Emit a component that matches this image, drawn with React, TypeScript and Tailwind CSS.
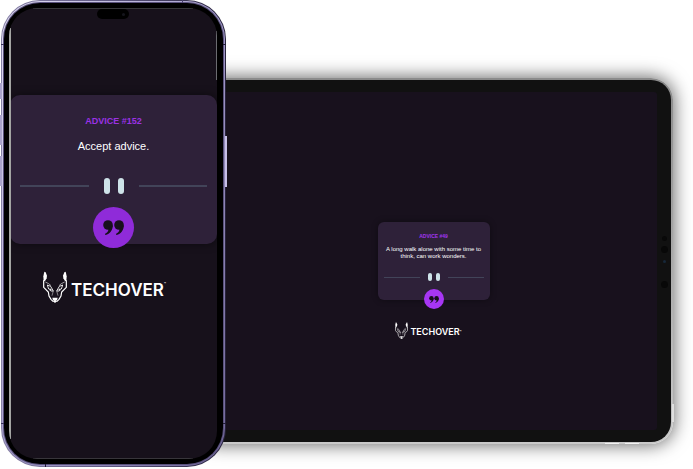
import React from "react";

type Size = "phone" | "tablet";

function WolfHalf() {
  return (
    <>
      <path d="M4 2 L8 4 L12 14 L11 22 L6 30 L2 31 L1 16 Z" fill="#fff" />
      <path d="M2 28 L2 49 L16 63 L18 75 L24 85 L31 92" stroke="#fff" strokeWidth="3.6" />
      <path d="M7 33 L17 38 L24 44" stroke="#fff" strokeWidth="1.8" />
      <path d="M13 42 L23 46 L31 60 L24 60 L17 54 Z" stroke="#fff" strokeWidth="2.6" />
      <path d="M19 50 L27 57 L22 57 Z" fill="#fff" />
      <path d="M31 60 L27 74" stroke="#fff" strokeWidth="1.4" />
    </>
  );
}

function Wolf({ className }: { className: string }) {
  return (
    <svg viewBox="0 0 72 96" className={className} aria-hidden="true" fill="none">
      <WolfHalf />
      <g transform="translate(72 0) scale(-1 1)">
        <WolfHalf />
      </g>
      <path d="M28 80 H44 L42 88 L36 91 L30 88 Z M29 90 H43 L36 96 Z" fill="#fff" />
    </svg>
  );
}

function Quotes({ className }: { className: string }) {
  return (
    <svg viewBox="0 0 21 15" className={className} aria-hidden="true" fill="#17101c">
      <circle cx="5" cy="5" r="4.800" />
      <path d="M9.800 5 C10 10 7 13.800 2.500 15 L1.800 14 C4 12.800 5.600 11.300 5.400 9 Z" />
      <circle cx="16" cy="5" r="4.800" />
      <path d="M20.800 5 C21 10 18 13.800 13.500 15 L12.800 14 C15 12.800 16.600 11.300 16.400 9 Z" />
    </svg>
  );
}

function Logo({ size }: { size: Size }) {
  const phone = size === "phone";
  return (
    <div
      className={
        phone
          ? "mt-[27px] flex items-end justify-center gap-1 pr-5 text-[17px] leading-[26px]"
          : "mt-[22px] flex items-end justify-center gap-[2px] pr-3 text-[9px] leading-[14px]"
      }
    >
      <Wolf className={phone ? "h-8 w-6" : "h-[17px] w-[13px]"} />
      <span className="relative font-['Inter',sans-serif] font-semibold text-white">
        TECHOVER
        <span className="absolute top-1 left-full text-[3px] leading-[6px]">™</span>
      </span>
    </div>
  );
}

function AdviceCard({ size, id, advice }: { size: Size; id: number; advice: string }) {
  const phone = size === "phone";
  const line = phone ? "h-[2px] flex-1 bg-[#424459]" : "h-px flex-1 bg-[#424459]";
  const bar = phone ? "h-4 w-[6px] rounded-full bg-[#cee3e9]" : "h-2 w-1 rounded-full bg-[#cee3e9]";
  return (
    <section
      className={
        phone
          ? "flex w-full flex-col items-center rounded-[10px] bg-[#2e2139] px-[10px] pt-5 text-center shadow-[0_0_8px_rgba(0,0,0,0.5)]"
          : "flex w-[112px] flex-col items-center rounded-md bg-[#2e2139] px-[6px] pt-[11px] text-center shadow-[0_0_6px_rgba(0,0,0,0.4)]"
      }
    >
      <h2
        className={
          phone
            ? "text-[9px] leading-3 font-bold text-[#9a32e4]"
            : "text-[5px] leading-[6px] font-bold text-[#a035ee]"
        }
      >
        ADVICE #{id}
      </h2>
      <p className={phone ? "mt-3 text-[11px] leading-[14px] text-white" : "mt-[7px] text-[6px] leading-[7px] text-white"}>
        {advice}
      </p>
      <div
        className={
          phone
            ? "mt-[25px] flex w-full items-center gap-[15px]"
            : "mt-[13px] flex w-full items-center gap-2"
        }
      >
        <span className={line} />
        <span className={phone ? "flex gap-2" : "flex gap-1"}>
          <span className={bar} />
          <span className={bar} />
        </span>
        <span className={line} />
      </div>
      <button
        type="button"
        aria-label="New advice"
        className={
          phone
            ? "mt-[13px] -mb-1 flex size-[41px] items-center justify-center rounded-full bg-[#8f2bd9]"
            : "mt-2 -mb-[9px] flex size-5 items-center justify-center rounded-full bg-[#a736f4]"
        }
      >
        <Quotes className={phone ? "h-[15px] w-[21px]" : "h-[7px] w-[10px]"} />
      </button>
    </section>
  );
}

function Phone() {
  return (
    <div className="relative z-10 h-[467px] w-[225px] shrink-0 rounded-[39px] bg-linear-to-r from-[#8781a6] via-[#5c5680] to-[#28233d] p-px">
      <span className="absolute top-[83px] -left-px h-4 w-[2px] bg-[#aaa3cb]" />
      <span className="absolute top-[115px] -left-px h-[30px] w-[2px] bg-[#aaa3cb]" />
      <span className="absolute top-[156px] -left-px h-[30px] w-[2px] bg-[#aaa3cb]" />
      <span className="absolute top-[136px] -right-px h-[51px] w-[2px] bg-[#c8c0e8]" />
      <span className="absolute top-0 left-[181px] z-10 h-[3px] w-px bg-[#4a4270]" />
      <span className="absolute bottom-0 left-[44px] z-10 h-[3px] w-px bg-[#211c36]" />
      <span className="absolute top-[44px] left-0 z-10 h-px w-[3px] bg-[#37315a]" />
      <span className="absolute top-[44px] right-0 z-10 h-px w-[3px] bg-[#211c36]" />
      <span className="absolute bottom-[43px] left-0 z-10 h-px w-[3px] bg-[#37315a]" />
      <span className="absolute right-0 bottom-[43px] z-10 h-px w-[3px] bg-[#211c36]" />
      <div className="h-full rounded-[38px] bg-linear-to-br from-[#e0dcf2] via-[#a59dcb] to-[#716799] p-px">
        <div className="h-full rounded-[37px] bg-[#5a527d] p-px">
          <div className="h-full rounded-[36px] bg-black py-[5px] pr-[6px] pl-[5px]">
            <div className="relative flex h-full flex-col overflow-hidden rounded-[28px] bg-[#17111b] pt-[87px] pl-px">
              <AdviceCard size="phone" id={152} advice="Accept advice." />
              <Logo size="phone" />
              <span className="absolute inset-x-6 top-0 h-px bg-[#38383b]" />
              <span className="absolute inset-x-6 bottom-0 h-px bg-[#38363b]" />
              <span className="absolute inset-y-5 left-0 w-[2px] bg-[#a4a5a3]" />
              <span className="absolute top-[23px] right-0 h-[49px] w-px bg-[#6b6b70]" />
              <span className="absolute top-px left-1/2 flex h-[10px] w-8 -translate-x-1/2 items-center justify-end rounded-full bg-black pr-1">
                <span className="size-[3px] rounded-full bg-[#15151c]" />
              </span>
            </div>
          </div>
        </div>
      </div>
    </div>
  );
}

function Tablet() {
  return (
    <div className="relative mt-[78px] mr-5 -ml-[30px] h-[366px] min-w-0 flex-1 rounded-[22px] bg-linear-to-b from-[#8b8b8b] to-[#c9c9c9] pt-[2px] pr-[2px] pb-[2px] shadow-[0_0_18px_1px_rgba(0,0,0,0.6)]">
      <div className="h-full rounded-[20px] bg-[#111111] px-[14px] pt-3 pb-3">
        <div className="flex h-full flex-col items-center rounded-[3px] bg-[#18111d] pt-[130px]">
          <AdviceCard
            size="tablet"
            id={49}
            advice="A long walk alone with some time to think, can work wonders."
          />
          <Logo size="tablet" />
        </div>
      </div>
      <div className="absolute top-[158px] right-[5px] flex w-[7px] flex-col items-center">
        <span className="size-[5px] rounded-full bg-[#090909]" />
        <span className="mt-[5px] size-[7px] rounded-full bg-[#080808]" />
        <span className="mt-[7px] size-[3px] rounded-full bg-[#17283a]" />
        <span className="mt-[18px] size-[7px] rounded-full bg-[#080808]" />
      </div>
      <span className="absolute right-[-1px] bottom-[22px] h-[18px] w-[2px] bg-[#dedede]" />
      <span className="absolute right-[54px] bottom-0 h-px w-[14px] bg-[#f2f2f2]" />
      <span className="absolute right-[34px] bottom-0 h-px w-[14px] bg-[#f2f2f2]" />
    </div>
  );
}

export default function App() {
  return (
    <main className="flex min-h-screen items-start overflow-hidden bg-white pl-px font-['Liberation_Sans',Arial,sans-serif]">
      <Phone />
      <Tablet />
    </main>
  );
}
